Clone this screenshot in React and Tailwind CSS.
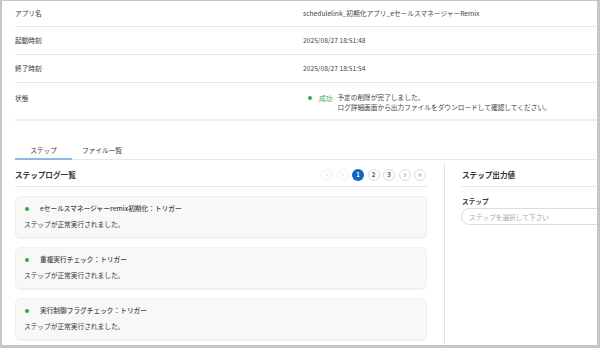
import { ChevronLeft, ChevronRight, ChevronsLeft, ChevronsRight } from "lucide-react";

const font = { fontFamily: '"Noto Sans CJK JP", "Noto Sans", sans-serif' };

const rows = [
  { label: "アプリ名", value: "schedulelink_初期化アプリ_eセールスマネージャーRemix", h: "h-[26px]" },
  { label: "起動時刻", value: "2025/08/27 18:51:48", h: "h-[28px]" },
  { label: "終了時刻", value: "2025/08/27 18:51:54", h: "h-[28px]" },
];

const steps = [
  "eセールスマネージャーremix初期化：トリガー",
  "重複実行チェック：トリガー",
  "実行制御フラグチェック：トリガー",
];

const PageBtn = ({ children, active, disabled }) => (
  <div
    className={`w-[12px] h-[12px] rounded-full flex items-center justify-center text-[6px] font-bold ${
      active
        ? "bg-[#1565c0] text-white"
        : disabled
        ? "border border-[#eeeeee] text-[#c8c8c8]"
        : "border border-[#dddddd] text-[#555]"
    }`}
  >
    {children}
  </div>
);

export default function App() {
  return (
    <div className="w-[600px] h-[348px] bg-[#c6c6c6] pl-[2px] pt-[1px] pr-[3px] pb-[3px]" style={font}>
      <div className="w-full h-full bg-white overflow-hidden text-[6.7px] text-[#333]">
        {/* info table */}
        <div className="pl-[13px]">
          {rows.map((r) => (
            <div key={r.label} className={`${r.h} flex items-center border-b border-[#e6e6e6]`}>
              <div className="w-[288px]">{r.label}</div>
              <div className="text-[#444]">{r.value}</div>
            </div>
          ))}
          <div className="h-[38px] flex items-start pt-[10px] border-b-2 border-[#eeeeee]">
            <div className="w-[288px]">状態</div>
            <div className="flex items-start text-[#444]">
              <div className="w-[4px] h-[4px] rounded-full bg-[#1fb141] mt-[3px] ml-[5px] mr-[7px]" />
              <span className="text-[#3aa84e] mr-[5px]">成功</span>
              <div className="leading-[9.5px]">
                <div>予定の削除が完了しました。</div>
                <div>ログ詳細画面から出力ファイルをダウンロードして確認してください。</div>
              </div>
            </div>
          </div>
        </div>

        {/* tabs */}
        <div className="ml-[13px] mt-[18px] flex border-b border-[#e8e8e8] h-[21px]">
          <div className="w-[57px] flex items-center justify-center pt-[3px] border-b-2 border-[#8fb8dc] -mb-[1px]">ステップ</div>
          <div className="w-[60px] flex items-center justify-center pt-[3px]">ファイル一覧</div>
        </div>

        <div className="flex pl-[13px] mt-[3px]">
          {/* left column */}
          <div className="w-[412px] shrink-0">
            <div className="h-[24px] flex items-center justify-between border-b border-[#e6e6e6]">
              <div className="text-[7.6px] font-bold text-[#333]">ステップログ一覧</div>
              <div className="flex items-center gap-[3.5px] mr-[1px]">
                <PageBtn disabled><ChevronsLeft size={6} strokeWidth={2} /></PageBtn>
                <PageBtn disabled><ChevronLeft size={6} strokeWidth={2} /></PageBtn>
                <PageBtn active>1</PageBtn>
                <PageBtn>2</PageBtn>
                <PageBtn>3</PageBtn>
                <PageBtn><ChevronRight size={6} strokeWidth={2.5} /></PageBtn>
                <PageBtn><ChevronsRight size={6} strokeWidth={2} /></PageBtn>
              </div>
            </div>
            <div className="flex flex-col gap-[9px] pt-[9px]">
              {steps.map((s) => (
                <div key={s} className="h-[42px] rounded-[6px] bg-[#f8f8f8] shadow-[0_1px_1px_rgba(0,0,0,0.06)] border border-[#f0f0f0] px-[8px] pt-[7px]">
                  <div className="flex items-center h-[9px]">
                    <div className="w-[4px] h-[4px] rounded-full bg-[#1fb141] ml-[1px] mr-[11px]" />
                    <span className="font-medium text-[#444]">{s}</span>
                  </div>
                  <div className="mt-[6px] text-[#333]">ステップが正常実行されました。</div>
                </div>
              ))}
            </div>
          </div>

          {/* divider */}
          <div className="w-[1px] shrink-0 bg-[#e4e4e4] ml-[17px] h-[190px]" />

          {/* right column */}
          <div className="flex-1 min-w-0 pl-[17px]">
            <div className="h-[24px] flex items-center border-b border-[#e6e6e6]">
              <div className="text-[7.6px] font-bold text-[#333] whitespace-nowrap">ステップ出力値</div>
            </div>
            <div className="mt-[9px] font-bold text-[#333]">ステップ</div>
            <div className="mt-[2px] h-[17px] w-[160px] rounded-full border border-[#d9dee4] flex items-center pl-[7px] text-[#aaaaaa] -ml-[1px] whitespace-nowrap">
              ステップを選択して下さい
            </div>
          </div>
        </div>
      </div>
    </div>
  );
}
